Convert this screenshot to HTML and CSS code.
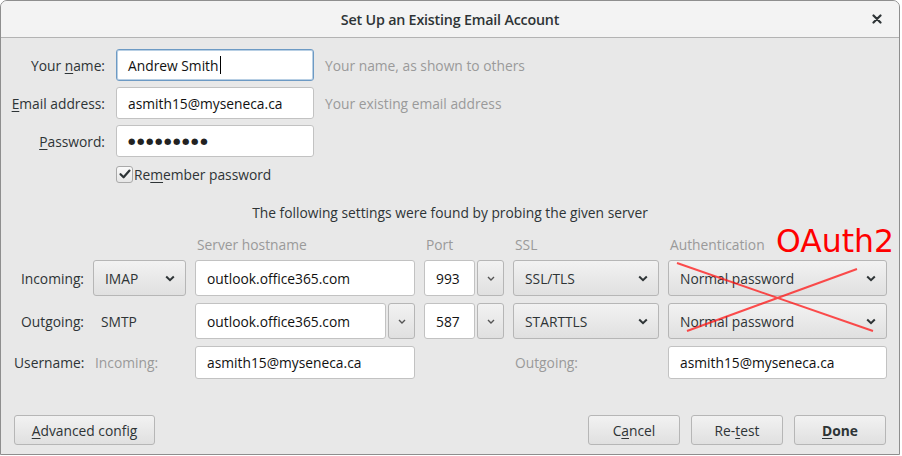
FILE: index.html
```html
<!DOCTYPE html>
<html>
<head>
<meta charset="utf-8">
<link rel="stylesheet" href="styles.css">
</head>
<body>
<div class="window">
  <div class="titlebar">
    <span class="title">Set Up an Existing Email Account</span>
    <span class="close">
      <svg width="10" height="10" viewBox="0 0 10 10"><path d="M1.5 1.5 L8.5 8.5 M8.5 1.5 L1.5 8.5" stroke="#2e3436" stroke-width="2.2" stroke-linecap="round"/></svg>
    </span>
  </div>
  <div class="content">
    <div class="account">
      <label class="lbl">Your <u>n</u>ame:</label>
      <div class="input focus">Andrew Smith<span class="caret"></span></div>
      <div class="hint">Your name, as shown to others</div>

      <label class="lbl"><u>E</u>mail address:</label>
      <div class="input">asmith15@myseneca.ca</div>
      <div class="hint">Your existing email address</div>

      <label class="lbl"><u>P</u>assword:</label>
      <div class="input"><span class="dots">●●●●●●●●●</span></div>
      <div></div>

      <div></div>
      <div class="remember">
        <span class="checkbox"><svg width="14" height="14" viewBox="0 0 14 14"><path d="M2.5 7.2 L5.6 10.3 L11.5 3.6" fill="none" stroke="#2e3436" stroke-width="2.2" stroke-linecap="round" stroke-linejoin="round"/></svg></span>
        <span>Re<u>m</u>ember password</span>
      </div>
      <div></div>
    </div>

    <p class="probe">The following settings were found by probing the given server</p>

    <div class="servers">
      <div></div>
      <div></div>
      <div class="head">Server hostname</div>
      <div class="head">Port</div>
      <div class="head">SSL</div>
      <div class="head">Authentication</div>

      <div class="rowlbl">Incoming:</div>
      <div class="btn select"><span>IMAP</span><svg class="chev" width="10" height="7" viewBox="0 0 10 7"><path d="M1.2 1.5 L5 5.2 L8.8 1.5" fill="none" stroke="#2e3436" stroke-width="2"/></svg></div>
      <div class="input tall">outlook.office365.com</div>
      <div class="combo"><div class="input tall port">993</div><div class="btn mini"><svg width="8" height="5" viewBox="0 0 8 5"><path d="M1 1 L4 4 L7 1" fill="none" stroke="#555" stroke-width="1.4"/></svg></div></div>
      <div class="btn select"><span>SSL/TLS</span><svg class="chev" width="10" height="7" viewBox="0 0 10 7"><path d="M1.2 1.5 L5 5.2 L8.8 1.5" fill="none" stroke="#2e3436" stroke-width="2"/></svg></div>
      <div class="btn select"><span>Normal password</span><svg class="chev" width="10" height="7" viewBox="0 0 10 7"><path d="M1.2 1.5 L5 5.2 L8.8 1.5" fill="none" stroke="#2e3436" stroke-width="2"/></svg></div>

      <div class="rowlbl">Outgoing:</div>
      <div class="plain">SMTP</div>
      <div class="combo"><div class="input tall grow">outlook.office365.com</div><div class="btn mini"><svg width="8" height="5" viewBox="0 0 8 5"><path d="M1 1 L4 4 L7 1" fill="none" stroke="#555" stroke-width="1.4"/></svg></div></div>
      <div class="combo"><div class="input tall port">587</div><div class="btn mini"><svg width="8" height="5" viewBox="0 0 8 5"><path d="M1 1 L4 4 L7 1" fill="none" stroke="#555" stroke-width="1.4"/></svg></div></div>
      <div class="btn select"><span>STARTTLS</span><svg class="chev" width="10" height="7" viewBox="0 0 10 7"><path d="M1.2 1.5 L5 5.2 L8.8 1.5" fill="none" stroke="#2e3436" stroke-width="2"/></svg></div>
      <div class="btn select"><span>Normal password</span><svg class="chev" width="10" height="7" viewBox="0 0 10 7"><path d="M1.2 1.5 L5 5.2 L8.8 1.5" fill="none" stroke="#2e3436" stroke-width="2"/></svg></div>

      <div class="rowlbl">Username:</div>
      <div class="muted">Incoming:</div>
      <div class="input user">asmith15@myseneca.ca</div>
      <div></div>
      <div class="muted">Outgoing:</div>
      <div class="input user">asmith15@myseneca.ca</div>
    </div>

    <div class="footer">
      <div class="btn action adv"><u>A</u>dvanced config</div>
      <div class="right">
        <div class="btn action">C<u>a</u>ncel</div>
        <div class="btn action">Re-<u>t</u>est</div>
        <div class="btn action done"><u>D</u>one</div>
      </div>
    </div>
  </div>
</div>

<div class="oauth">OAuth2</div>
<svg class="cross" width="902" height="456" viewBox="0 0 902 456">
  <path d="M677 263 L873 331 M687 331 L857 269" stroke="rgba(255,20,20,0.75)" stroke-width="2" fill="none"/>
</svg>
</body>
</html>
```

FILE: styles.css
```css
html, body {
  margin: 0;
  padding: 0;
  background: #ffffff;
}
body {
  position: relative;
  width: 902px;
  height: 456px;
  overflow: hidden;
  font-family: "Open Sans", "DejaVu Sans", sans-serif;
  font-size: 13.8px;
  color: #2e3436;
}
u {
  text-decoration: underline;
  text-underline-offset: 2px;
}
.window {
  width: 898px;
  height: 453px;
  border: 1px solid #8e8e8e;
  border-radius: 7px 7px 0 0;
  background: #e8e8e8;
  overflow: hidden;
  display: flex;
  flex-direction: column;
}
.titlebar {
  height: 36px;
  flex: none;
  background: #f3f3f3;
  border-bottom: 1px solid #b3b3b3;
  display: flex;
  align-items: center;
  justify-content: center;
  position: relative;
}
.title {
  font-weight: 600;
  font-size: 14.3px;
  letter-spacing: -0.2px;
  color: #2e3436;
}
.close {
  position: absolute;
  right: 17px;
  top: 13px;
  display: flex;
}
.content {
  flex: 1;
  display: flex;
  flex-direction: column;
}
.account {
  display: grid;
  grid-template-columns: 104px 198px auto;
  column-gap: 11px;
  row-gap: 6px;
  padding-top: 11px;
  align-items: center;
}
.lbl {
  text-align: right;
}
.input {
  box-sizing: border-box;
  height: 32px;
  background: #ffffff;
  border: 1px solid #c2c2c2;
  border-radius: 3px;
  padding: 0 11px;
  display: flex;
  align-items: center;
  color: #111;
  white-space: nowrap;
  overflow: hidden;
}
.input.focus {
  border-color: #6d9ac4;
  box-shadow: inset 0 0 0 1px #b8cfe4;
}
.caret {
  display: inline-block;
  width: 1px;
  height: 18px;
  background: #000;
  margin-left: 1px;
}
.hint {
  color: #9a9a9a;
}
.dots {
  font-family: "DejaVu Sans", sans-serif;
  font-size: 8.5px;
  letter-spacing: 1.6px;
  color: #222;
}
.remember {
  display: flex;
  align-items: center;
  gap: 1px;
  height: 20px;
  margin-top: 1px;
}
.checkbox {
  box-sizing: border-box;
  width: 17px;
  height: 17px;
  border: 1px solid #a9a9a9;
  border-radius: 3px;
  background: linear-gradient(#fafafa, #e6e6e6);
  display: flex;
  align-items: center;
  justify-content: center;
}
.probe {
  margin: 19px 0 0 0;
  line-height: 20px;
  text-align: center;
}
.servers {
  display: grid;
  grid-template-columns: 70px 93px 220px 80px 146px 219px;
  grid-template-rows: 22px 36px 36px 33px;
  column-gap: 9px;
  row-gap: 7px;
  padding-left: 13px;
  margin-top: 8px;
  align-items: center;
}
.head {
  color: #9a9a9a;
  align-self: start;
  line-height: 20px;
  padding-top: 4px;
  margin-left: 2px;
  margin-bottom: -2px;
}
.rowlbl {
  text-align: right;
}
.plain {
  padding-left: 8px;
}
.muted {
  color: #9a9a9a;
  padding-left: 2px;
}
.btn {
  box-sizing: border-box;
  background: linear-gradient(#f2f2f2, #e0e0e0);
  border: 1px solid #b6b6b6;
  border-radius: 3px;
  display: flex;
  align-items: center;
  color: #2e3436;
}
.select {
  height: 36px;
  justify-content: space-between;
  padding: 0 10px 0 11px;
}
.input.tall {
  height: 36px;
}
.input.user {
  height: 33px;
}
.combo {
  display: flex;
  gap: 2px;
  height: 36px;
}
.combo .grow {
  flex: 1;
}
.combo .port {
  width: 51px;
  flex: none;
}
.mini {
  width: 27px;
  height: 36px;
  flex: none;
  justify-content: center;
}
.footer {
  margin-top: 36px;
  display: flex;
  justify-content: space-between;
  padding: 0 13px 0 13px;
}
.right {
  display: flex;
  gap: 11px;
}
.action {
  height: 30px;
  justify-content: center;
  width: 92px;
}
.adv {
  width: 141px;
}
.done {
  font-weight: 700;
}
.oauth {
  position: absolute;
  left: 776px;
  top: 222px;
  font-family: "DejaVu Sans", sans-serif;
  font-size: 31.5px;
  line-height: 38px;
  color: #ff0000;
}
.cross {
  position: absolute;
  left: 0;
  top: 0;
  pointer-events: none;
}
```
